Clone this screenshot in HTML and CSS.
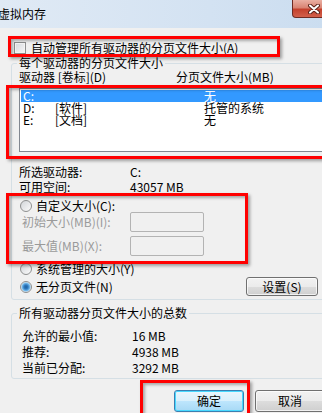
FILE: index.html
```html
<!DOCTYPE html>
<html lang="zh-CN">
<head>
  <meta charset="UTF-8">
  <meta name="viewport" content="width=device-width, initial-scale=1.0">
  <link rel="stylesheet" href="styles.css">
  <title>虚拟内存</title>
</head>
<body>

  <div class="screen">
    <div class="dialog">
      <div class="titlebar">
        <span class="title">虚拟内存</span>
        <span class="close">
          <svg width="12" height="10" viewBox="0 0 12 10">
            <path d="M2 1.5l8 7M10 1.5l-8 7" stroke="#5b2219" stroke-width="4" stroke-linecap="round"/>
            <path d="M2 1.5l8 7M10 1.5l-8 7" stroke="#fff" stroke-width="2" stroke-linecap="round"/>
          </svg>
        </span>
      </div>

      <div class="panel">
        <div class="auto"><span class="check"></span>自动管理所有驱动器的分页文件大小(A)</div>

        <fieldset class="group">
          <legend>每个驱动器的分页文件大小</legend>
          <div class="head">
            <span>驱动器 [卷标](D)</span>
            <span>分页文件大小(MB)</span>
          </div>
          <div class="list">
            <div class="row selected"><span>C:</span><span></span><span>无</span></div>
            <div class="row"><span>D:</span><span>[软件]</span><span>托管的系统</span></div>
            <div class="row"><span>E:</span><span>[文档]</span><span>无</span></div>
          </div>
          <div class="info">
            <span>所选驱动器:</span><span>C:</span>
            <span>可用空间:</span><span>43057 MB</span>
          </div>
          <div class="option custom"><span class="radio"></span>自定义大小(C):</div>
          <div class="field"><span class="label">初始大小(MB)(I):</span><span class="box"></span></div>
          <div class="field second"><span class="label">最大值(MB)(X):</span><span class="box"></span></div>
          <div class="option system"><span class="radio"></span>系统管理的大小(Y)</div>
          <div class="option nofile"><span class="radio on"></span>无分页文件(N)<span class="btn set">设置(S)</span></div>
        </fieldset>

        <fieldset class="group total">
          <legend>所有驱动器分页文件大小的总数</legend>
          <div class="sums">
            <span>允许的最小值:</span><span>16 MB</span>
            <span>推荐:</span><span>4938 MB</span>
            <span>当前已分配:</span><span>3292 MB</span>
          </div>
        </fieldset>

        <div class="actions">
          <span class="btn ok">确定</span>
          <span class="btn">取消</span>
        </div>
      </div>
    </div>

    <div class="mark m1"></div>
    <div class="mark m2"></div>
    <div class="mark m3"></div>
    <div class="mark m4"></div>
  </div>

</body>
</html>
```

FILE: styles.css
```css
* {
  margin: 0;
  padding: 0;
  box-sizing: border-box;
}

body {
  background-color: #f0f0f0;
  color: #000;
  font-family: "Noto Sans CJK SC", "Noto Sans", sans-serif;
  font-size: 12px;
  line-height: 12px;
  overflow: hidden;
}

.screen {
  position: relative;
  width: 322px;
  height: 413px;
  overflow: hidden;
}

.dialog {
  width: 350px;
}

/* title bar */

.titlebar {
  height: 28px;
  display: flex;
  align-items: flex-start;
  background: linear-gradient(to right, #e0eaf5, #d3e2f2 60%, #c9dcef);
}

.title {
  margin: 8px 0 0 -2px;
  line-height: 12px;
}

.close {
  margin-left: auto;
  margin-right: 15px;
  width: 43px;
  height: 18px;
  display: flex;
  align-items: center;
  justify-content: center;
  border: 1px solid #6e2b22;
  border-top: none;
  border-radius: 0 0 4px 4px;
  background: linear-gradient(#eab0a3, #d98473 45%, #c4412d 55%, #d2604b);
}

.panel {
  padding: 0 11px;
}

/* checkbox line */

.auto {
  display: flex;
  align-items: center;
  gap: 5px;
  height: 13px;
  line-height: 13px;
  margin-top: 13px;
  padding-left: 3px;
}

.check {
  width: 12px;
  height: 12px;
  border: 1px solid #8e8f8f;
  background: linear-gradient(135deg, #d6d9dd, #f7f7f7);
  box-shadow: inset 0 0 0 1px #f4f4f4;
}

/* group boxes */

.group {
  margin-top: 3px;
  min-width: 0;
  border: 1px solid #d5dfe5;
  border-radius: 3px;
  padding: 2px 7px 3px;
}

.group legend {
  padding: 0 2px;
  margin-left: -2px;
  line-height: 12px;
}

.head {
  display: grid;
  grid-template-columns: 157px 1fr;
}

.list {
  margin-top: 5px;
  height: 64px;
  padding: 1px;
  background: #fff;
  border: 1px solid #828790;
}

.row {
  display: grid;
  grid-template-columns: 32px 149px 1fr;
  height: 12px;
  line-height: 12px;
  padding-left: 2px;
}

.row.selected {
  background: #3399ff;
  color: #fff;
}

.info {
  display: grid;
  grid-template-columns: 111px 1fr;
  line-height: 15px;
  margin-top: 12px;
}

.option {
  display: flex;
  align-items: center;
  gap: 4px;
  height: 13px;
  line-height: 13px;
  padding-left: 1px;
}

.custom {
  margin-top: 5px;
}

.system {
  margin-top: 6px;
}

.nofile {
  margin-top: 2px;
  height: 19px;
}

.radio {
  width: 12px;
  height: 12px;
  border: 1px solid #8e8f8f;
  border-radius: 50%;
  background: linear-gradient(135deg, #d2d5d9, #fbfbfb);
}

.radio.on {
  background: radial-gradient(circle, #1f5f99 0, #2d79c0 2px, #7cc0ef 4px, #e9eef3 5px, #fbfbfb);
}

.field {
  display: flex;
  align-items: center;
  height: 20px;
  padding-left: 3px;
  color: #9a9a9a;
}

.field.second {
  margin-top: 4px;
}

.field .label {
  width: 108px;
}

.box {
  width: 74px;
  height: 20px;
  border: 1px solid #b3b3b3;
  border-radius: 2px;
}

/* buttons */

.btn {
  display: flex;
  align-items: center;
  justify-content: center;
  width: 70px;
  height: 22px;
  border: 1px solid #707070;
  border-radius: 3px;
  background: linear-gradient(#f2f2f2, #ebebeb 50%, #dddddd 50%, #cfcfcf);
  box-shadow: inset 0 0 0 1px rgba(255, 255, 255, .7);
}

.btn.set {
  margin-left: auto;
  margin-right: 13px;
  width: 72px;
  height: 19px;
}

.btn.ok {
  border-color: #3c7fb1;
  background: linear-gradient(#eaf6fd, #d9f0fc 50%, #bee6fd 50%, #a7d9f5);
  box-shadow: inset 0 0 0 1px #48d9ff;
}

.total {
  margin-top: 7px;
  padding-top: 9px;
  padding-bottom: 2px;
}

.sums {
  display: grid;
  grid-template-columns: 110px 1fr;
  line-height: 16px;
  padding-left: 3px;
}

.actions {
  display: flex;
  justify-content: flex-end;
  gap: 11px;
  margin-top: 11px;
  padding-right: 14px;
}

/* red highlight marks drawn over the dialog */

.mark {
  position: absolute;
  border: 3px solid #ff0000;
  box-shadow: 2px 2px 3px rgba(0, 0, 0, .35), inset 2px 2px 3px rgba(0, 0, 0, .3);
}

.m1 {
  left: 8px;
  top: 36px;
  width: 272px;
  height: 21px;
}

.m2 {
  left: 6px;
  top: 85px;
  width: 330px;
  height: 74px;
}

.m3 {
  left: 6px;
  top: 193px;
  width: 242px;
  height: 71px;
}

.m4 {
  left: 140px;
  top: 380px;
  width: 110px;
  height: 40px;
}
```
